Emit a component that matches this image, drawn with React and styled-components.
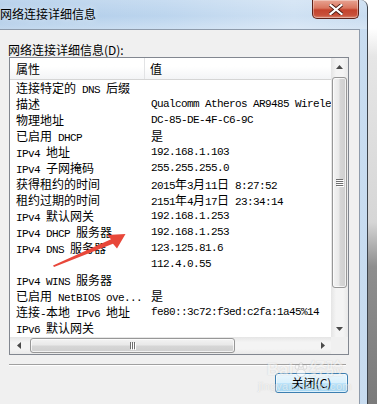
import React from 'react';
import styled, { createGlobalStyle } from 'styled-components';

const GlobalStyle = createGlobalStyle`
  html, body { margin: 0; padding: 0; }
  body {
    width: 377px;
    height: 404px;
    overflow: hidden;
    background: #ffffff;
    font-family: "Noto Sans CJK SC", "Noto Sans", sans-serif;
  }
`;

const Screen = styled.div`
  position: relative;
  display: flex;
  width: 377px;
  height: 404px;
  overflow: hidden;
`;

const Window = styled.div`
  display: flex;
  flex-direction: column;
  width: 367px;
  border-top-right-radius: 7px;
  border-right: 1px solid #3d434a;
  background: linear-gradient(90deg, #aecbe8 0%, #bcd5ee 45%, #cfe1f3 80%, #c8dcf0 100%);
  overflow: hidden;
`;

const Desk = styled.div`
  flex: 1;
  background: linear-gradient(180deg, #ffffff 0, #ffffff 7%, #e6e6e6 14%, #d6d6d6 55%, #8e8e8e 66%, #7b7b7b 100%);
`;

const TitleBar = styled.div`
  display: flex;
  align-items: flex-start;
  height: 29px;
  background: linear-gradient(180deg, rgba(255, 255, 255, 0.18) 0%, rgba(255, 255, 255, 0) 55%, rgba(255, 255, 255, 0.25) 100%);
`;

const Title = styled.div`
  flex: 1;
  padding-top: 6px;
  font-size: 12px;
  line-height: 16px;
  color: #000;
  text-shadow: 0 0 6px rgba(255, 255, 255, 0.9);
`;

const CloseButton = styled.div`
  display: flex;
  align-items: center;
  justify-content: center;
  width: 45px;
  height: 18px;
  margin-right: 8px;
  border: 1px solid #5d2219;
  border-top: none;
  border-radius: 0 0 5px 5px;
  background: linear-gradient(180deg, #e8a493 0%, #d9765f 45%, #c4432d 55%, #c8513b 85%, #dc8a73 100%);
  box-shadow: inset 0 0 0 1px rgba(255, 255, 255, 0.35);
`;

const Body = styled.div`
  flex: 1;
  display: flex;
  padding-right: 7px;
`;

const Panel = styled.div`
  flex: 1;
  display: flex;
  flex-direction: column;
  padding: 12px 10px 0 9px;
  border-top: 1px solid #8e9bab;
  border-right: 1px solid #8e9bab;
  background: #f0f0f0;
`;

const Label = styled.div`
  margin-left: -1px;
  font-size: 12px;
  line-height: 15px;
  color: #000;
`;

const ListBox = styled.div`
  display: grid;
  grid-template-columns: 1fr 17px;
  grid-template-rows: 1fr 17px;
  height: 296px;
  border: 1px solid #828790;
  background: #fff;
`;

const Content = styled.div`
  overflow: hidden;
  white-space: nowrap;
`;

const Header = styled.div`
  display: grid;
  grid-template-columns: 135px 1fr;
  height: 21px;
  border-bottom: 1px solid #d5d5d5;
  background: linear-gradient(180deg, #ffffff 0%, #ffffff 40%, #f3f4f6 100%);
`;

const HeadCell = styled.div`
  padding-left: ${p => p.$pad}px;
  font-size: 12px;
  line-height: 21px;
  color: #000;
  border-right: ${p => (p.$divider ? '1px solid #e2e3e5' : 'none')};
`;

const Row = styled.div`
  display: grid;
  grid-template-columns: 135px 1fr;
  height: 16px;
  font-family: "Liberation Mono", "Noto Sans CJK SC", monospace;
  font-size: 11px;
  letter-spacing: -0.6px;
  line-height: 16px;
  color: #000;
`;

const Cell = styled.div`
  padding-left: 6px;
  overflow: ${p => (p.$clip ? 'hidden' : 'visible')};
`;

const Han = styled.span`
  font-family: "Noto Sans CJK SC", sans-serif;
  font-size: 12px;
  letter-spacing: 0;
`;

const VScroll = styled.div`
  display: flex;
  flex-direction: column;
  background: linear-gradient(90deg, #e5e5e5 0%, #f4f4f4 30%, #f4f4f4 70%, #e9e9e9 100%);
`;

const HScroll = styled.div`
  display: flex;
  background: linear-gradient(180deg, #e5e5e5 0%, #f4f4f4 30%, #f4f4f4 70%, #e9e9e9 100%);
`;

const Corner = styled.div`
  background: #f0f0f0;
`;

const ArrowBox = styled.div`
  flex: 0 0 17px;
  display: flex;
  align-items: center;
  justify-content: center;
`;

const VTrack = styled.div`
  flex: 1;
  display: flex;
  flex-direction: column;
  padding: 2px 1px 0 1px;
`;

const HTrack = styled.div`
  flex: 1;
  display: flex;
  padding: 1px 0 1px 3px;
`;

const Thumb = styled.div`
  display: flex;
  align-items: center;
  justify-content: center;
  box-sizing: border-box;
  border: 1px solid #979797;
  border-radius: 3px;
  ${p =>
    p.$vertical
      ? `height: 211px; background: linear-gradient(90deg, #f3f3f3 0%, #e9e9e9 45%, #d6d6d6 55%, #cfcfcf 100%);`
      : `width: 205px; background: linear-gradient(180deg, #f3f3f3 0%, #e9e9e9 45%, #d6d6d6 55%, #cfcfcf 100%);`}
  box-shadow: inset 0 0 0 1px rgba(255, 255, 255, 0.7);
`;

const Grip = styled.div`
  display: flex;
  flex-direction: ${p => (p.$vertical ? 'column' : 'row')};
  gap: 1px;
  & > i {
    display: block;
    background: #6e6e6e;
    box-shadow: 1px 1px 0 #fff;
    ${p => (p.$vertical ? 'width: 7px; height: 1px;' : 'width: 1px; height: 7px;')}
  }
`;

const Separator = styled.div`
  margin: 9px 3px 0 0;
  border-top: 1px solid #a0a0a0;
  border-bottom: 1px solid #ffffff;
`;

const Footer = styled.div`
  display: flex;
  justify-content: flex-end;
  padding: 7px 1px 0 0;
`;

const Button = styled.div`
  width: 73px;
  height: 20px;
  box-sizing: border-box;
  border: 1px solid #3c7fb1;
  border-radius: 3px;
  background: linear-gradient(180deg, #eaf6fd 0%, #d9f0fc 48%, #bee6fd 52%, #a7d9f5 100%);
  box-shadow: inset 0 0 0 1px rgba(255, 255, 255, 0.6);
  text-align: center;
  font-size: 12px;
  line-height: 18px;
  color: #000;
`;

const Overlay = styled.svg`
  position: absolute;
  left: 0;
  top: 0;
  pointer-events: none;
`;

const Watermark = styled.div`
  position: absolute;
  left: 258px;
  top: 360px;
  display: flex;
  flex-direction: column;
  align-items: center;
  pointer-events: none;
  opacity: 0.6;
  color: rgba(255, 255, 255, 0.85);
  text-shadow: 0 0 1px rgba(110, 110, 110, 0.5);
`;

const MarkTop = styled.div`
  display: flex;
  align-items: center;
  font-family: "Liberation Sans", "Noto Sans CJK SC", sans-serif;
  font-weight: bold;
  font-size: 17px;
  line-height: 20px;
`;

const MarkSub = styled.div`
  font-family: "Liberation Sans", sans-serif;
  font-size: 11px;
  line-height: 12px;
  letter-spacing: 0.3px;
`;

const HAN = /([\u2E80-\u9FFF\uFF00-\uFFEF]+)/;

function Mixed({ text }) {
  return text
    .split(HAN)
    .filter(Boolean)
    .map((part, i) => (HAN.test(part) ? <Han key={i}>{part}</Han> : <span key={i}>{part}</span>));
}

const rows = [
  ['连接特定的 DNS 后缀', ''],
  ['描述', 'Qualcomm Atheros AR9485 Wireless Network Adapter'],
  ['物理地址', 'DC-85-DE-4F-C6-9C'],
  ['已启用 DHCP', '是'],
  ['IPv4 地址', '192.168.1.103'],
  ['IPv4 子网掩码', '255.255.255.0'],
  ['获得租约的时间', '2015年3月11日 8:27:52'],
  ['租约过期的时间', '2151年4月17日 23:34:14'],
  ['IPv4 默认网关', '192.168.1.253'],
  ['IPv4 DHCP 服务器', '192.168.1.253'],
  ['IPv4 DNS 服务器', '123.125.81.6'],
  ['', '112.4.0.55'],
  ['IPv4 WINS 服务器', ''],
  ['已启用 NetBIOS ove...', '是'],
  ['连接-本地 IPv6 地址', 'fe80::3c72:f3ed:c2fa:1a45%14'],
  ['IPv6 默认网关', ''],
];

function Tri({ dir }) {
  const pts = {
    up: '0,4 3.5,0 7,4',
    down: '0,0 3.5,4 7,0',
    left: '4,0 0,3.5 4,7',
    right: '0,0 4,3.5 0,7',
  }[dir];
  const vertical = dir === 'up' || dir === 'down';
  return (
    <svg width={vertical ? 7 : 4} height={vertical ? 4 : 7}>
      <polygon points={pts} fill="#4a4a4a" />
    </svg>
  );
}

export default function App() {
  return (
    <>
      <GlobalStyle />
      <Screen>
        <Window>
          <TitleBar>
            <Title>网络连接详细信息</Title>
            <CloseButton>
              <svg width="14" height="11" viewBox="0 0 14 11">
                <path
                  d="M1.5 1 L12.5 10 M12.5 1 L1.5 10"
                  stroke="#4a1a12"
                  strokeWidth="4"
                  strokeLinecap="square"
                />
                <path
                  d="M1.5 1 L12.5 10 M12.5 1 L1.5 10"
                  stroke="#ffffff"
                  strokeWidth="2.2"
                  strokeLinecap="square"
                />
              </svg>
            </CloseButton>
          </TitleBar>
          <Body>
            <Panel>
              <Label>网络连接详细信息(D):</Label>
              <ListBox>
                <Content>
                  <Header>
                    <HeadCell $pad={6} $divider>属性</HeadCell>
                    <HeadCell $pad={5}>值</HeadCell>
                  </Header>
                  {rows.map(([k, v], i) => (
                    <Row key={i}>
                      <Cell $clip>
                        <Mixed text={k} />
                      </Cell>
                      <Cell>
                        <Mixed text={v} />
                      </Cell>
                    </Row>
                  ))}
                </Content>
                <VScroll>
                  <ArrowBox>
                    <Tri dir="up" />
                  </ArrowBox>
                  <VTrack>
                    <Thumb $vertical>
                      <Grip $vertical>
                        <i />
                        <i />
                        <i />
                        <i />
                      </Grip>
                    </Thumb>
                  </VTrack>
                  <ArrowBox>
                    <Tri dir="down" />
                  </ArrowBox>
                </VScroll>
                <HScroll>
                  <ArrowBox>
                    <Tri dir="left" />
                  </ArrowBox>
                  <HTrack>
                    <Thumb>
                      <Grip>
                        <i />
                        <i />
                        <i />
                      </Grip>
                    </Thumb>
                  </HTrack>
                  <ArrowBox>
                    <Tri dir="right" />
                  </ArrowBox>
                </HScroll>
                <Corner />
              </ListBox>
              <Separator />
              <Footer>
                <Button>关闭(C)</Button>
              </Footer>
            </Panel>
          </Body>
        </Window>
        <Desk />
        <Overlay width="377" height="404">
          <polygon
            points="53,265.5 111,239.3 107,235 125.5,234 117,248.5 113,243.8 54,267"
            fill="#e8473a"
          />
        </Overlay>
        <Watermark>
          <MarkTop>
            Bai
            <svg width="16" height="16" viewBox="0 0 16 16">
              <g fill="rgba(255,255,255,0.8)" stroke="rgba(110,110,110,0.5)" strokeWidth="0.6">
                <ellipse cx="4" cy="5" rx="1.8" ry="2.3" />
                <ellipse cx="8" cy="3" rx="1.8" ry="2.3" />
                <ellipse cx="12" cy="5" rx="1.8" ry="2.3" />
                <ellipse cx="8" cy="11" rx="4.5" ry="3.8" />
              </g>
            </svg>
            经验
          </MarkTop>
          <MarkSub>jingyan.baidu.com</MarkSub>
        </Watermark>
      </Screen>
    </>
  );
}
